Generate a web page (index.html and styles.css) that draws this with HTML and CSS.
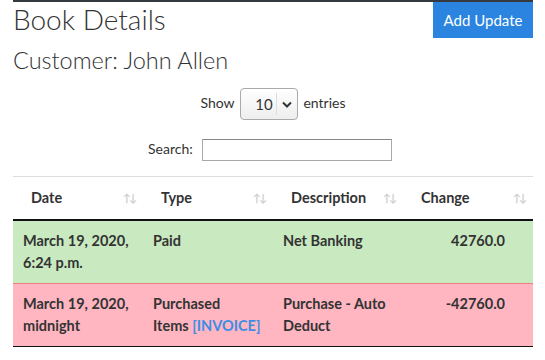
FILE: index.html
```html
<!DOCTYPE html>
<html lang="en">

<head>
    <meta charset="UTF-8">
    <meta name="viewport" content="width=device-width, initial-scale=1.0">
    <title>Book Details</title>
    <link rel="stylesheet" href="styles.css">
</head>

<body>
    <div class="container">
        <div class="page-head">
            <div class="titles">
                <h1>Book Details</h1>
                <h2>Customer: John Allen</h2>
            </div>
            <a href="#update" class="btn-update">Add Update</a>
        </div>

        <!-- datatable controls -->
        <div class="dt-length">
            <label>Show
                <span class="select">
                    <span class="select-value">10</span>
                    <span class="select-arrow">
                        <svg width="10" height="7" viewBox="0 0 10 7"><path d="M1 1.5 5 5.5 9 1.5" fill="none" stroke="#333" stroke-width="2"/></svg>
                    </span>
                </span>
                entries</label>
        </div>
        <div class="dt-filter">
            <label>Search: <input type="search"></label>
        </div>

        <table class="book-table">
            <thead>
                <tr>
                    <th>Date<span class="sort">&uarr;&darr;</span></th>
                    <th>Type<span class="sort">&uarr;&darr;</span></th>
                    <th>Description<span class="sort">&uarr;&darr;</span></th>
                    <th>Change<span class="sort">&uarr;&darr;</span></th>
                </tr>
            </thead>
            <tbody>
                <tr class="credit">
                    <td>March 19, 2020, 6:24 p.m.</td>
                    <td>Paid</td>
                    <td>Net Banking</td>
                    <td class="num">42760.0</td>
                </tr>
                <tr class="debit">
                    <td>March 19, 2020, midnight</td>
                    <td>Purchased <span class="nowrap">Items <a href="#invoice">[INVOICE]</a></span></td>
                    <td>Purchase - Auto Deduct</td>
                    <td class="num">-42760.0</td>
                </tr>
            </tbody>
        </table>
    </div>
</body>

</html>
```

FILE: styles.css
```css
body {
    margin: 0;
    font-family: Lato, "Liberation Sans", sans-serif;
    color: #333;
}

.container {
    width: 520px;
    margin: 0 12px 0 13px;
    border-top: 2px solid #343a40;
}

.page-head {
    display: flex;
    justify-content: space-between;
    align-items: flex-start;
}

.titles h1 {
    margin: 0;
    font-size: 28px;
    font-weight: 300;
    line-height: 34px;
}

.titles h2 {
    margin: 9px 0 0;
    font-size: 23.5px;
    font-weight: 300;
    line-height: 30px;
}

.btn-update {
    display: block;
    width: 100px;
    height: 36px;
    line-height: 36px;
    text-align: center;
    background-color: #2a84e0;
    color: #fff;
    font-size: 15px;
    text-decoration: none;
}

.dt-length {
    margin-top: 13px;
    text-align: center;
    font-size: 14px;
}

.select {
    display: inline-flex;
    align-items: center;
    vertical-align: middle;
    width: 56px;
    height: 30px;
    margin: 0 2px;
    border: 1px solid #aaa;
    border-radius: 4px;
    background: linear-gradient(#fff, #eee);
}

.select-value {
    flex: 1;
    padding-left: 11px;
    font-size: 15px;
}

.select-arrow {
    display: flex;
    align-items: center;
    justify-content: center;
    width: 20px;
    height: 22px;
    border-left: 1px solid #ddd;
}

.dt-filter {
    margin-top: 19px;
    padding-left: 135px;
    font-size: 14px;
}

.dt-filter input {
    width: 190px;
    height: 22px;
    margin-left: 6px;
    border: 1px solid #aaa;
    border-top-color: #888;
    vertical-align: middle;
}

.book-table {
    width: 100%;
    margin-top: 15px;
    border-collapse: collapse;
    border-top: 1px solid #ddd;
    font-size: 14.5px;
    font-weight: bold;
    table-layout: fixed;
}

.book-table th {
    position: relative;
    padding: 10px 18px;
    text-align: left;
    line-height: 22px;
    border-bottom: 2px solid #111;
}

.book-table .sort {
    position: absolute;
    right: 8px;
    top: 10px;
    color: #d0d0d0;
    font-size: 11px;
    font-weight: bold;
    letter-spacing: -2px;
}

.book-table td {
    padding: 9px 10px;
    line-height: 22px;
    vertical-align: top;
}

.book-table td.num {
    text-align: right;
    padding-right: 28px;
}

.book-table .nowrap {
    white-space: nowrap;
}

.book-table tr.credit {
    background-color: #c9e9c0;
    border-bottom: 1px solid #f08080;
}

.book-table tr.debit {
    background-color: #ffb6c1;
    border-bottom: 1px solid #111;
}

.book-table td a {
    color: #3a8ee6;
    text-decoration: none;
}
```
